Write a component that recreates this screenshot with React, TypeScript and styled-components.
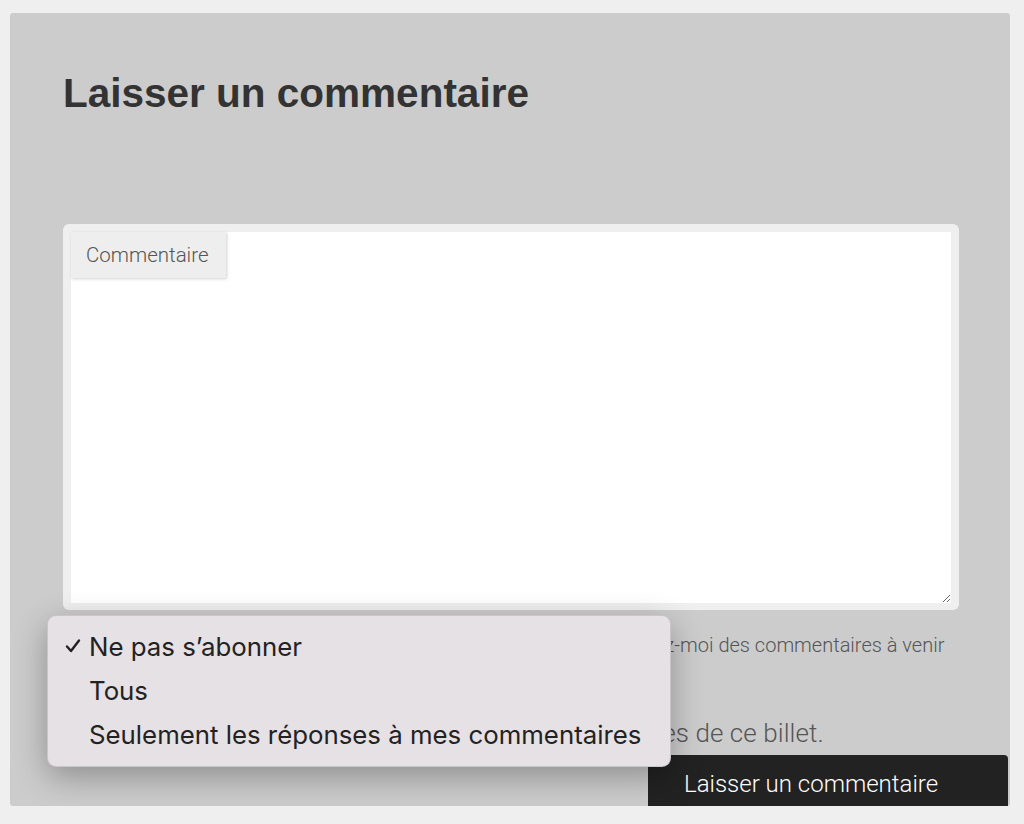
import React from 'react'
import styled, { createGlobalStyle } from 'styled-components'

const GlobalStyle = createGlobalStyle`
  html, body {
    margin: 0;
    padding: 0;
    background: #efefef;
  }
  body {
    font-family: 'Liberation Sans', Arial, sans-serif;
  }
`

const Page = styled.div`
  padding: 13px 14px 0 10px;
`

const Panel = styled.section`
  position: relative;
  display: flex;
  flex-direction: column;
  background: #cccccc;
  border-radius: 3px;
  padding: 0 51px 0 53px;
`

const Title = styled.h2`
  margin: 57px 0 0 0;
  font-family: 'Liberation Sans', Arial, sans-serif;
  font-size: 40.5px;
  line-height: 46px;
  font-weight: 700;
  color: #333333;
`

const FieldWrap = styled.div`
  position: relative;
  margin-top: 108px;
  padding: 8px 8px 7px 8px;
  background: #efefef;
  border-radius: 6px;
  display: flex;
`

const TextArea = styled.textarea`
  flex: 1;
  height: 371px;
  box-sizing: border-box;
  border: none;
  outline: none;
  background: #ffffff;
  resize: vertical;
  margin: 0;
  padding: 60px 16px 16px;
  font-family: Roboto, sans-serif;
  font-size: 18px;
`

const FieldLabel = styled.label`
  position: absolute;
  top: 8px;
  left: 8px;
  width: 155px;
  height: 46px;
  box-sizing: border-box;
  padding-left: 15px;
  display: flex;
  align-items: center;
  background: #eeeeee;
  box-shadow: 1px 1px 3px rgba(0, 0, 0, 0.18);
  font-family: Roboto, 'Liberation Sans', sans-serif;
  font-weight: 300;
  font-size: 20.5px;
  color: #555555;
`

const NotifyRow = styled.div`
  display: flex;
  align-items: center;
  gap: 12px;
  margin-top: 20px;
  height: 30px;
`

const FakeSelect = styled.div`
  width: 509px;
  height: 30px;
`

const NotifyText = styled.span`
  font-family: Roboto, 'Liberation Sans', sans-serif;
  font-weight: 300;
  font-size: 20px;
  color: #555555;
  white-space: nowrap;
`

const Note = styled.p`
  margin: 58px 0 0 0;
  font-family: Roboto, 'Liberation Sans', sans-serif;
  font-weight: 300;
  font-size: 26px;
  line-height: 30px;
  letter-spacing: 0.08px;
  color: #555555;
  white-space: nowrap;
`

const Submit = styled.button`
  align-self: flex-end;
  margin: 7px -49px -6px 0;
  width: 360px;
  height: 57px;
  border: none;
  border-radius: 4px;
  background: #222222;
  color: #ffffff;
  text-align: left;
  padding: 0 0 0 36px;
  font-family: Roboto, 'Liberation Sans', sans-serif;
  font-weight: 300;
  font-size: 24px;
  cursor: pointer;
`

const Menu = styled.ul`
  position: absolute;
  left: 37px;
  top: 602px;
  width: 624px;
  box-sizing: border-box;
  margin: 0;
  padding: 8px 0 10px;
  list-style: none;
  background: #e6e1e5;
  border: 1px solid rgba(0, 0, 0, 0.12);
  border-radius: 9px;
  box-shadow: 0 10px 32px rgba(0, 0, 0, 0.3);
`

const MenuItem = styled.li`
  display: flex;
  align-items: center;
  height: 44px;
  font-family: Inter, 'Liberation Sans', sans-serif;
  font-size: 25.8px;
  color: #222222;
`

const CheckSlot = styled.span`
  width: 41px;
  box-sizing: border-box;
  padding-left: 17px;
  display: flex;
  align-items: center;
`

const options = [
  'Ne pas s\u2019abonner',
  'Tous',
  'Seulement les réponses à mes commentaires',
]

const App: React.FC = () => {
  return (
    <Page>
      <GlobalStyle />
      <Panel>
        <Title>Laisser un commentaire</Title>
        <FieldWrap>
          <FieldLabel htmlFor='comment'>Commentaire</FieldLabel>
          <TextArea id='comment' />
        </FieldWrap>
        <NotifyRow>
          <FakeSelect />
          <NotifyText>Avertissez-moi des commentaires à venir</NotifyText>
        </NotifyRow>
        <Note>Vous pouvez aussi vous abonner à toutes les réponses de ce billet.</Note>
        <Submit>Laisser un commentaire</Submit>
        <Menu>
          {options.map((o, i) => (
            <MenuItem key={o}>
              <CheckSlot>
                {i === 0 && (
                  <svg width='16' height='16' viewBox='0 0 16 16'>
                    <polyline
                      points='2,8.5 6,13 14,2.5'
                      fill='none'
                      stroke='#222'
                      strokeWidth='2.4'
                      strokeLinecap='round'
                      strokeLinejoin='round'
                    />
                  </svg>
                )}
              </CheckSlot>
              {o}
            </MenuItem>
          ))}
        </Menu>
      </Panel>
    </Page>
  )
}

export default App
